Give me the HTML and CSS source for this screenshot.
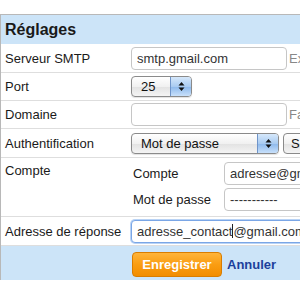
FILE: index.html
```html
<!DOCTYPE html>
<html lang="fr">
<head>
<meta charset="utf-8">
<link rel="stylesheet" href="styles.css">
</head>
<body>
<div class="panel">
  <div class="head">Réglages</div>

  <div class="row r1">
    <div class="lbl">Serveur SMTP</div>
    <div class="cell"><span class="input w156">smtp.gmail.com</span><span class="hint">Ex : smtp.gmail.com</span></div>
  </div>

  <div class="row r2">
    <div class="lbl">Port</div>
    <div class="cell">
      <span class="select w61"><span class="sel-text">25</span><span class="arrows"><svg width="7" height="11" viewBox="0 0 7 11"><path d="M3.5 1 L6.5 4.5 L0.5 4.5 Z M3.5 10 L6.5 6.5 L0.5 6.5 Z" fill="#111"/></svg></span></span>
    </div>
  </div>

  <div class="row r3">
    <div class="lbl">Domaine</div>
    <div class="cell"><span class="input w156"></span><span class="hint">Facultatif</span></div>
  </div>

  <div class="row r4">
    <div class="lbl">Authentification</div>
    <div class="cell">
      <span class="select w148"><span class="sel-text">Mot de passe</span><span class="arrows"><svg width="7" height="11" viewBox="0 0 7 11"><path d="M3.5 1 L6.5 4.5 L0.5 4.5 Z M3.5 10 L6.5 6.5 L0.5 6.5 Z" fill="#111"/></svg></span></span>
      <span class="btn-gray">Sélectionner</span>
    </div>
  </div>

  <div class="row r5">
    <div class="lbl top">Compte</div>
    <div class="cell nested">
      <div class="sub">
        <span class="sublbl">Compte</span><span class="input wide">adresse@gmail.com</span>
      </div>
      <div class="sub">
        <span class="sublbl">Mot de passe</span><span class="input wide">-----------</span>
      </div>
    </div>
  </div>

  <div class="row r6">
    <div class="lbl">Adresse de réponse</div>
    <div class="cell"><span class="input focus">adresse_contact<span class="caret"></span>@gmail.com</span></div>
  </div>

  <div class="actions">
    <span class="btn-orange">Enregistrer</span>
    <a class="cancel">Annuler</a>
  </div>
</div>
</body>
</html>
```

FILE: styles.css
```css
html, body {
  margin: 0;
  padding: 0;
  background: #fff;
  overflow: hidden;
}
body {
  font-family: "Liberation Sans", Arial, sans-serif;
  font-size: 13px;
  color: #1a1a1a;
  padding-top: 14px;
  width: 300px;
  height: 300px;
}
.panel {
  width: 420px;
  border-top: 1px solid #b8b8b8;
  border-left: 1px solid #b8b8b8;
}
.head {
  height: 29px;
  background: #cce4f8;
  font-weight: bold;
  font-size: 16px;
  line-height: 29px;
  padding-left: 4px;
  color: #1a1a1a;
}
.row {
  display: flex;
  border-bottom: 1px solid #dedede;
}
.r1 { height: 28px; }
.r2 { height: 27px; }
.r3 { height: 27px; }
.r4 { height: 28px; }
.r5 { height: 58px; }
.r6 { height: 28px; }
.lbl {
  width: 126px;
  padding-left: 4px;
  display: flex;
  align-items: center;
  box-sizing: border-box;
  flex: none;
  white-space: nowrap;
}
.lbl.top {
  align-items: flex-start;
  padding-top: 5px;
}
.cell {
  display: flex;
  align-items: center;
  padding-left: 4px;
  white-space: nowrap;
}
.input {
  display: inline-flex;
  align-items: center;
  box-sizing: border-box;
  height: 23px;
  border: 1px solid #c6c6c6;
  border-radius: 4px;
  padding: 0 5px;
  background: #fff;
  color: #333;
  font-size: 13px;
}
.w156 { width: 156px; }
.wide { width: 120px; }
.hint {
  color: #888;
  margin-left: 2px;
  font-size: 13px;
}
.select {
  display: inline-flex;
  box-sizing: border-box;
  height: 21px;
  border: 1px solid #8a8a8a;
  border-radius: 4px;
  background: linear-gradient(#ffffff, #f1f1f1 50%, #e2e2e2 51%, #f4f4f4);
  overflow: hidden;
  box-shadow: 0 1px 1px rgba(0,0,0,0.12);
}
.w61 { width: 61px; }
.w148 { width: 148px; }
.sel-text {
  flex: 1;
  padding-left: 9px;
  line-height: 19px;
  color: #111;
}
.arrows {
  width: 20px;
  display: flex;
  align-items: center;
  justify-content: center;
  border-left: 1px solid #6f94c9;
  background: linear-gradient(#d6e8fb, #a9cbf1 50%, #8cb8ec 51%, #c8e0fa);
}
.btn-gray {
  margin-left: 4px;
  height: 21px;
  box-sizing: border-box;
  border: 1px solid #8a8a8a;
  border-radius: 4px;
  padding: 0 7px;
  line-height: 19px;
  background: linear-gradient(#ffffff, #f1f1f1 50%, #e2e2e2 51%, #f4f4f4);
  color: #111;
}
.nested {
  flex-direction: column;
  align-items: flex-start;
  padding-top: 4px;
  gap: 3px;
}
.sub {
  display: flex;
  align-items: center;
}
.sublbl {
  width: 93px;
  padding-left: 2px;
  box-sizing: border-box;
  color: #1a1a1a;
}
.focus {
  width: 200px;
  border: 1px solid #7aa6e6;
  box-shadow: 0 0 0 1px #b9d3f5;
  color: #333;
}
.caret {
  display: inline-block;
  width: 1px;
  height: 14px;
  background: #222;
}
.actions {
  height: 34px;
  background: #cce4f8;
  display: flex;
  align-items: flex-start;
  padding-left: 131px;
  padding-top: 6px;
  box-sizing: border-box;
}
.btn-orange {
  width: 90px;
  height: 25px;
  box-sizing: border-box;
  border: 1px solid #d97d00;
  border-radius: 4px;
  background: linear-gradient(#ffb43a, #fa9d12 50%, #f28d00);
  color: #fff;
  font-weight: bold;
  font-size: 13px;
  text-align: center;
  line-height: 23px;
}
.cancel {
  margin-left: 5px;
  color: #1c3f9c;
  font-weight: bold;
  line-height: 25px;
}
```
